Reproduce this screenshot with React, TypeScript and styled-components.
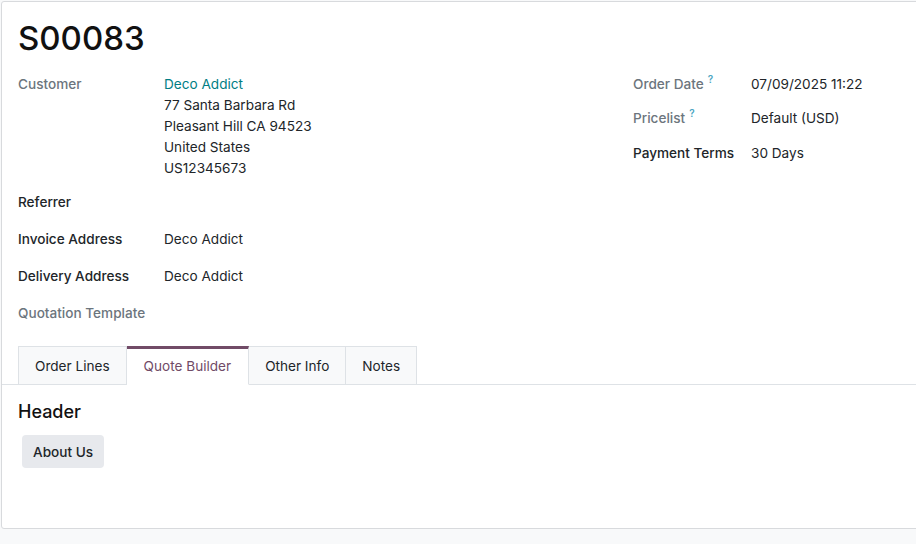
import React from "react";
import styled, { createGlobalStyle } from "styled-components";

const Global = createGlobalStyle`
  html, body { margin: 0; padding: 0; background: #f8f9fa; }
  body { font-family: Inter, "Noto Sans", sans-serif; font-size: 13.6px; color: #212529; overflow: hidden; }
  * { box-sizing: border-box; }
`;

const Page = styled.div`
  width: 916px;
  height: 544px;
  padding: 1px 0 0 1px;
  overflow: hidden;
`;

const Sheet = styled.div`
  width: 940px;
  height: 528px;
  background: #fff;
  border: 1px solid #d8dadd;
  border-radius: 3px;
  padding: 12px 0 0 16px;
`;

const Title = styled.h1`
  margin: 0 0 12px 0;
  font-size: 33px;
  font-weight: 500;
  line-height: 48px;
  color: #111;
`;

const Groups = styled.div`
  display: flex;
`;

const Group = styled.div<{ $width: number; $label: number }>`
  width: ${(p) => p.$width}px;
  display: grid;
  grid-template-columns: ${(p) => p.$label}px 1fr;
  align-content: start;
`;

const Label = styled.div<{ $muted?: boolean; $gap?: number }>`
  color: ${(p) => (p.$muted ? "#6c757d" : "#212529")};
  font-weight: 500;
  line-height: 21px;
  margin-bottom: ${(p) => p.$gap ?? 16}px;
  white-space: nowrap;
`;

const Value = styled.div<{ $gap?: number }>`
  line-height: 21px;
  margin-bottom: ${(p) => p.$gap ?? 16}px;
  white-space: nowrap;
`;

const Link = styled.span`
  color: #017e84;
`;

const Help = styled.sup`
  color: #4aa6c2;
  font-size: 10px;
  font-weight: 600;
  margin-left: 4px;
  line-height: 0;
  vertical-align: 0;
  position: relative;
  top: -6px;
`;

const TabBar = styled.div`
  display: flex;
  margin: 6px 0 0 -16px;
  padding-left: 16px;
  border-bottom: 1px solid #dee2e6;
  height: 39px;
`;

const Tab = styled.div<{ $active?: boolean }>`
  height: 39px;
  padding: ${(p) => (p.$active ? "0 17px 1px" : "1px 16px 0")};
  display: flex;
  align-items: center;
  background: ${(p) => (p.$active ? "#fff" : "#f8f9fa")};
  color: ${(p) => (p.$active ? "#714b67" : "#212529")};
  border: 1px solid #dee2e6;
  border-top: ${(p) => (p.$active ? "3px solid #714b67" : "1px solid #dee2e6")};
  border-bottom: ${(p) => (p.$active ? "1px solid #fff" : "1px solid #dee2e6")};
  margin-bottom: -1px;
  & + & { border-left-width: 0; }
`;

const TabContent = styled.div`
  padding-top: 16px;
`;

const SectionTitle = styled.div`
  font-size: 18px;
  font-weight: 500;
  color: #111;
  line-height: 22px;
  margin-bottom: 12px;
`;

const Chip = styled.button`
  margin-left: 4px;
  font: inherit;
  font-weight: 500;
  color: #212529;
  background: #e7e9ed;
  border: none;
  border-radius: 4px;
  height: 33px;
  padding: 0 11px;
`;

export default function App() {
  return (
    <Page>
      <Global />
      <Sheet>
        <Title>S00083</Title>
        <Groups>
          <Group $width={615} $label={146}>
            <Label $muted>Customer</Label>
            <Value $gap={13}>
              <Link>Deco Addict</Link>
              <br />77 Santa Barbara Rd
              <br />Pleasant Hill CA 94523
              <br />United States
              <br />US12345673
            </Value>
            <Label>Referrer</Label>
            <Value />
            <Label>Invoice Address</Label>
            <Value>Deco Addict</Value>
            <Label>Delivery Address</Label>
            <Value>Deco Addict</Value>
            <Label $muted>Quotation Template</Label>
            <Value />
          </Group>
          <Group $width={280} $label={118}>
            <Label $muted $gap={13}>Order Date<Help>?</Help></Label>
            <Value $gap={13}>07/09/2025 11:22</Value>
            <Label $muted $gap={14}>Pricelist<Help>?</Help></Label>
            <Value $gap={14}>Default (USD)</Value>
            <Label>Payment Terms</Label>
            <Value>30 Days</Value>
          </Group>
        </Groups>
        <TabBar>
          <Tab>Order Lines</Tab>
          <Tab $active>Quote Builder</Tab>
          <Tab>Other Info</Tab>
          <Tab>Notes</Tab>
        </TabBar>
        <TabContent>
          <SectionTitle>Header</SectionTitle>
          <Chip>About Us</Chip>
        </TabContent>
      </Sheet>
    </Page>
  );
}
